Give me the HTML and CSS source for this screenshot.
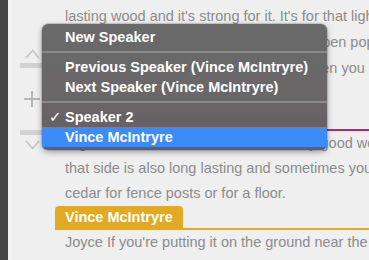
FILE: index.html
```html
<!DOCTYPE html>
<html lang="en">

<head>
    <meta charset="UTF-8">
    <meta name="viewport" content="width=device-width, initial-scale=1.0">
    <title>Transcript</title>
    <link rel="stylesheet" href="styles.css">
</head>

<body>

    <div class="app">
        <!-- Barra escura da esquerda -->
        <aside class="rail"></aside>

        <!-- Ferramentas do gutter -->
        <nav class="gutter">
            <svg class="chev" width="15" height="10" viewBox="0 0 15 10">
                <polyline points="1,9 7.5,1.5 14,9" />
            </svg>
            <div class="gbar"></div>
            <svg class="plus" width="16" height="16" viewBox="0 0 16 16">
                <line x1="8" y1="0" x2="8" y2="16" />
                <line x1="0" y1="8" x2="16" y2="8" />
            </svg>
            <div class="gbar gbar-low"></div>
            <svg class="chev chev-down" width="15" height="10" viewBox="0 0 15 10">
                <polyline points="1,1 7.5,8.5 14,1" />
            </svg>
        </nav>

        <!-- Texto da transcrição -->
        <main class="transcript">
            <div class="para para-first">
                <p>lasting wood and it's strong for it. It's for that light</p>
                <p>weight furniture or boat building, when open poplar</p>
                <p>the grain is tight, and it looks so nice when you</p>
                <p>sand it down.</p>
            </div>
            <div class="speaker speaker-pink"><span class="tag">Speaker 2</span></div>
            <div class="para">
                <p>Right, and the white oak is also a really good wood for that</p>
                <p>that side is also long lasting and sometimes you</p>
                <p>cedar for fence posts or for a floor.</p>
            </div>
            <div class="speaker speaker-yellow"><span class="tag">Vince McIntryre</span></div>
            <div class="para">
                <p>Joyce If you're putting it on the ground near the water</p>
            </div>
        </main>
    </div>

    <!-- Menu de contexto -->
    <div class="menu">
        <div class="item">New Speaker</div>
        <div class="sep"></div>
        <div class="item">Previous Speaker (Vince McIntryre)</div>
        <div class="item">Next Speaker (Vince McIntryre)</div>
        <div class="sep"></div>
        <div class="item"><span class="check">✓</span>Speaker 2</div>
        <div class="item active">Vince McIntryre</div>
    </div>

</body>

</html>
```

FILE: styles.css
```css
body {
    margin: 0;
    background: #efefef;
    font-family: "Liberation Sans", Arial, sans-serif;
    width: 369px;
    height: 260px;
    overflow: hidden;
    position: relative;
}

.app {
    display: flex;
    height: 260px;
}

.rail {
    width: 8px;
    background: #454545;
    flex-shrink: 0;
}

.gutter {
    width: 47px;
    flex-shrink: 0;
    display: flex;
    flex-direction: column;
    align-items: flex-start;
    padding-top: 49px;
    border-left: 4px solid #f4f4f4;
    box-sizing: border-box;
}

.gutter .chev {
    margin-left: 13px;
    fill: none;
    stroke: #c4c4c4;
    stroke-width: 1.6;
}

.gutter .gbar {
    width: 28px;
    height: 5px;
    background: #d2d2d2;
    margin-top: 4px;
    margin-left: 8px;
}

.gutter .plus {
    margin-top: 23px;
    margin-left: 12px;
    stroke: #b0b0b0;
    stroke-width: 1.8;
}

.gutter .gbar-low {
    margin-top: 23px;
}

.gutter .chev-down {
    margin-top: 5px;
}

.transcript {
    flex: 1;
    padding-top: 3px;
    min-width: 0;
    overflow: hidden;
}

.para {
    padding-left: 10px;
}

.para p {
    margin: 0;
    font-size: 14.5px;
    line-height: 25px;
    color: #8c8c8c;
    white-space: nowrap;
}

.para-first p {
    line-height: 26px;
}

.speaker {
    height: 22px;
    border-bottom: 2px solid;
}

.speaker .tag {
    display: inline-block;
    height: 22px;
    line-height: 22px;
    padding: 0 10px;
    border-radius: 4px 4px 0 0;
    color: #fff;
    font-weight: bold;
    font-size: 14.5px;
}

.speaker-pink {
    border-color: #a3306b;
}

.speaker-pink .tag {
    background: #a3306b;
}

.speaker-yellow {
    border-color: #e2aa22;
}

.speaker-yellow .tag {
    background: #e2aa22;
}

.menu {
    position: absolute;
    left: 42px;
    top: 24px;
    width: 285px;
    padding: 3px 0 3px;
    border-radius: 6px;
    background: linear-gradient(to bottom, #6a6a6a 0%, #696768 55%, #665b62 100%);
    box-shadow: 0 2px 6px rgba(0, 0, 0, 0.35), 0 0 0 0.5px rgba(0, 0, 0, 0.25);
}

.menu .item {
    height: 20px;
    line-height: 20px;
    padding-left: 23px;
    color: #fff;
    font-weight: bold;
    font-size: 14.5px;
    position: relative;
}

.menu .item.active {
    background: #3b8cf6;
}

.menu .check {
    position: absolute;
    left: 7px;
    font-family: "DejaVu Sans", sans-serif;
    font-size: 15px;
    font-weight: bold;
}

.menu .sep {
    height: 2px;
    margin: 4px 0;
    background: #8a8a8a;
}
```
